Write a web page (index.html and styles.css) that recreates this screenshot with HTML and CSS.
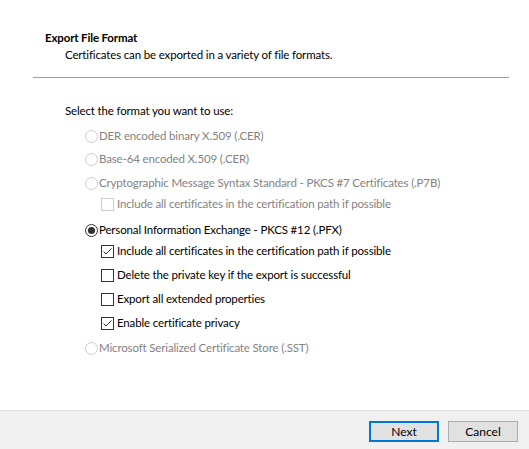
FILE: index.html
```html
<!DOCTYPE html>
<html>
<head>
<meta charset="utf-8">
<link rel="stylesheet" href="styles.css">
</head>
<body>
<div class="dialog">
  <div class="main">
    <div class="header">
      <div class="title">Export File Format</div>
      <div class="subtitle">Certificates can be exported in a variety of file formats.</div>
    </div>
    <div class="rule"></div>
    <div class="content">
      <div class="prompt">Select the format you want to use:</div>
      <div class="options">
        <div class="opt radio disabled first">
          <svg class="ctl" viewBox="0 0 13 13"><circle cx="6.5" cy="6.5" r="6" fill="#fff" stroke="#cccccc"/></svg>
          <span>DER encoded binary X.509 (.CER)</span>
        </div>
        <div class="opt radio disabled m7">
          <svg class="ctl" viewBox="0 0 13 13"><circle cx="6.5" cy="6.5" r="6" fill="#fff" stroke="#cccccc"/></svg>
          <span>Base-64 encoded X.509 (.CER)</span>
        </div>
        <div class="opt radio disabled">
          <svg class="ctl" viewBox="0 0 13 13"><circle cx="6.5" cy="6.5" r="6" fill="#fff" stroke="#cccccc"/></svg>
          <span>Cryptographic Message Syntax Standard - PKCS #7 Certificates (.P7B)</span>
        </div>
        <div class="opt check sub disabled m5">
          <svg class="ctl" viewBox="0 0 13 13"><rect x="0.5" y="0.5" width="12" height="12" fill="#fff" stroke="#cccccc"/></svg>
          <span>Include all certificates in the certification path if possible</span>
        </div>
        <div class="opt radio m10">
          <svg class="ctl" viewBox="0 0 13 13"><circle cx="6.5" cy="6.5" r="6" fill="#fff" stroke="#333"/><circle cx="6.5" cy="6.5" r="3.6" fill="#333"/></svg>
          <span>Personal Information Exchange - PKCS #12 (.PFX)</span>
        </div>
        <div class="opt check sub m5">
          <svg class="ctl" viewBox="0 0 13 13"><rect x="0.5" y="0.5" width="12" height="12" fill="#fff" stroke="#333"/><path d="M2.5 6.5 L5 9 L10.5 3.5" fill="none" stroke="#333" stroke-width="1"/></svg>
          <span>Include all certificates in the certification path if possible</span>
        </div>
        <div class="opt check sub">
          <svg class="ctl" viewBox="0 0 13 13"><rect x="0.5" y="0.5" width="12" height="12" fill="#fff" stroke="#333"/></svg>
          <span>Delete the private key if the export is successful</span>
        </div>
        <div class="opt check sub">
          <svg class="ctl" viewBox="0 0 13 13"><rect x="0.5" y="0.5" width="12" height="12" fill="#fff" stroke="#333"/></svg>
          <span>Export all extended properties</span>
        </div>
        <div class="opt check sub">
          <svg class="ctl" viewBox="0 0 13 13"><rect x="0.5" y="0.5" width="12" height="12" fill="#fff" stroke="#333"/><path d="M2.5 6.5 L5 9 L10.5 3.5" fill="none" stroke="#333" stroke-width="1"/></svg>
          <span>Enable certificate privacy</span>
        </div>
        <div class="opt radio disabled m9">
          <svg class="ctl" viewBox="0 0 13 13"><circle cx="6.5" cy="6.5" r="6" fill="#fff" stroke="#cccccc"/></svg>
          <span>Microsoft Serialized Certificate Store (.SST)</span>
        </div>
      </div>
    </div>
  </div>
  <div class="footer">
    <button class="btn default">Next</button>
    <button class="btn">Cancel</button>
  </div>
</div>
</body>
</html>
```

FILE: styles.css
```css
html, body {
  margin: 0;
  padding: 0;
  background: #ffffff;
}
body {
  font-family: Lato, "Noto Sans", sans-serif;
  font-size: 11.5px;
  letter-spacing: -0.15px;
  color: #000;
}
.dialog {
  width: 529px;
  height: 449px;
  display: flex;
  flex-direction: column;
}
.main {
  height: 410px;
  background: #fff;
}
.header {
  padding: 30px 0 0 45px;
  height: 48px;
  box-sizing: border-box;
}
.title {
  font-weight: bold;
  line-height: 16px;
}
.subtitle {
  line-height: 16px;
  margin-top: 1px;
  padding-left: 20px;
}
.rule {
  margin: 29px 20px 0 33px;
  height: 1px;
  background: #a0a0a0;
}
.content {
  padding: 25px 0 0 65px;
}
.prompt {
  line-height: 16px;
}
.options {
  display: flex;
  flex-direction: column;
  margin-top: 9px;
  padding-left: 20px;
}
.opt {
  display: flex;
  align-items: center;
  height: 16px;
  line-height: 16px;
  white-space: nowrap;
  margin-top: 8px;
}
.opt.first { margin-top: 0; }
.opt.m5 { margin-top: 5px; }
.opt.m7 { margin-top: 7px; }
.opt.m9 { margin-top: 9px; }
.opt.m10 { margin-top: 10px; }
.ctl {
  width: 13px;
  height: 13px;
  flex: none;
}
.radio .ctl { margin-right: 1px; }
.check .ctl { margin-right: 3px; }
.sub { padding-left: 16px; }
.disabled { color: #838383; }
.footer {
  flex: 1;
  background: #f0f0f0;
  border-top: 1px solid #dfdfdf;
  display: flex;
  justify-content: flex-end;
  align-items: flex-start;
  gap: 9px;
  padding: 10px 11px 0 0;
}
.btn {
  width: 70px;
  height: 21px;
  box-sizing: border-box;
  background: #e1e1e1;
  border: 1px solid #adadad;
  border-radius: 0;
  font-family: inherit;
  font-size: 12px;
  letter-spacing: 0;
  color: #000;
  padding: 0;
  margin: 0;
}
.btn.default {
  border: 2px solid #0078d7;
}
```
